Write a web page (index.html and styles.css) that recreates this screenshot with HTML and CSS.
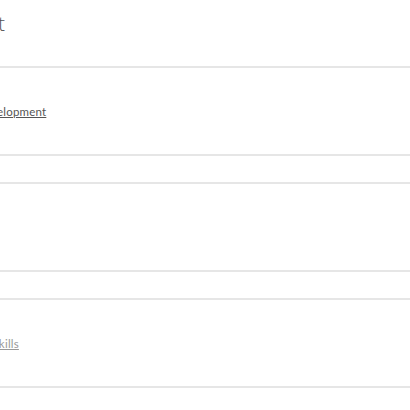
FILE: index.html
```html
<!DOCTYPE html>
<html>
<head>
    <title>Skills Assessment</title>
    <meta charset="UTF-8">
    <link rel="stylesheet" href="styles.css">
</head>
<body>
    <div class="page">
        <h1 class="title"><span>Assessment</span></h1>
        <ul class="items">
            <li class="item"><a href="#" class="link">Development</a></li>
            <li class="item"></li>
            <li class="item"><a href="#" class="link link-muted">Soft skills</a></li>
        </ul>
    </div>
</body>
</html>
```

FILE: styles.css
```css
body {
    margin: 0;
    font-family: Lato, "Open Sans", Arial, sans-serif;
    background-color: #fff;
    overflow: hidden;
}

.page {
    margin-left: -100px;
    width: 520px;
}

.title {
    margin: 0;
    height: 66px;
    width: 105px;
    padding-top: 10px;
    box-sizing: border-box;
    display: flex;
    justify-content: flex-end;
    font-family: "Open Sans", Arial, sans-serif;
    font-size: 21px;
    font-weight: 300;
    color: #555;
    line-height: 26px;
    white-space: nowrap;
}

.items {
    list-style: none;
    margin: 0;
    padding: 0;
}

.item {
    height: 86px;
    border-top: 2px solid #e6e6e6;
    border-bottom: 2px solid #e6e6e6;
    margin-bottom: 26px;
    display: flex;
    align-items: center;
}

.link {
    margin-left: 76px;
    font-size: 11.5px;
    letter-spacing: 0.2px;
    color: #555;
}

.link-muted {
    margin-left: 69px;
    color: #999;
}
```
